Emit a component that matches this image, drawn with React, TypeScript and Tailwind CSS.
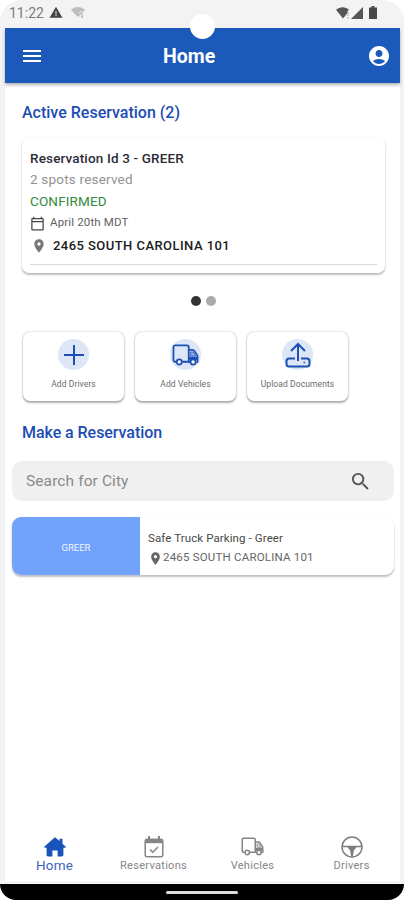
import type { ReactNode } from 'react';
import {
  MdAccountCircle,
  MdLocationOn,
  MdMenu,
  MdOutlineCalendarToday,
  MdSearch,
  MdWarning,
} from 'react-icons/md';

function TruckIcon({ className }: { className: string }) {
  return (
    <svg viewBox="0 0 26 21" className={className} fill="none" stroke="currentColor" strokeWidth="1.7">
      <path d="M4 17H3c-1 0-1.6-.6-1.6-1.6V2.8c0-1 .6-1.6 1.6-1.6h11.5c1 0 1.600.600 1.600 1.600V17H10" />
      <path d="M16 5.500h3.800c.600 0 1 .200 1.400.700l3 4.300c.300.400.400.700.400 1.200V17h-1.200M16 17h1.500" />
      <path d="M18 7.500h2.200l2.600 4H18Z" fill="currentColor" fillOpacity="0.35" strokeWidth="0.8" />
      <path d="M16 12.200h8.600v3H16Z" fill="currentColor" stroke="none" />
      <circle cx="7" cy="17.300" r="2.500" fill="white" />
      <circle cx="20.300" cy="17.300" r="2.500" fill="white" />
    </svg>
  );
}

function UploadIcon() {
  return (
    <svg viewBox="0 0 28 28" className="w-7 h-7" fill="none" stroke="#1d4fb5" strokeWidth="2">
      <path d="M11 17.500H5a2.500 2.500 0 0 0-2.500 2.500v3A2.500 2.500 0 0 0 5 25.500h18a2.500 2.500 0 0 0 2.500-2.500v-3a2.500 2.500 0 0 0-2.500-2.500h-6" />
      <path d="M14 20V3M7 10l7-7 7 7" />
      <path d="M19.500 21.500h1.500" strokeWidth="1.500" />
    </svg>
  );
}

function HomeIcon() {
  return (
    <svg viewBox="0 0 22 20" className="w-[22px] h-5" fill="#1b54b8">
      <path d="M10.300.700a1 1 0 0 1 1.400 0l3.800 3.300V1.800h3v4.900l3 2.700c.600.600.300 1.300-.500 1.300h-1.600v7.100c0 1-.600 1.600-1.500 1.600h-4.300v-6H8.400v6H4.100c-.900 0-1.500-.600-1.500-1.600v-7.100H1c-.800 0-1.100-.700-.500-1.300Z" />
    </svg>
  );
}

function CalendarCheckIcon() {
  return (
    <svg viewBox="0 0 20 22" className="w-5 h-[22px]" fill="none" stroke="#858585" strokeWidth="1.500">
      <rect x="1.200" y="3.300" width="17.600" height="17.400" rx="2" />
      <path d="M1.500 5.300h17" strokeWidth="3.800" />
      <path d="M5 0v4M15 0v4" strokeWidth="2" />
      <path d="m6 13.600 2.800 2.700 5.200-5.300" />
    </svg>
  );
}

function SteeringIcon() {
  return (
    <svg viewBox="0 0 22 22" className="w-[22px] h-[22px]" fill="none" stroke="#7c7c7c" strokeWidth="1.500">
      <circle cx="11" cy="11" r="10" />
      <path d="M1.500 9.700h19v1.600H15.500l-2.700 3.200-.9 6h-1.800l-.9-6-2.700-3.200H1.500Z" fill="#7c7c7c" stroke="none" />
    </svg>
  );
}

function StatusBar() {
  return (
    <div className="relative h-7 flex items-start pt-[5px] pl-[9px] pr-[25px]">
      <span className="text-[14px] leading-4 text-[#7d7d7d]">11:22</span>
      <MdWarning className="w-[14px] h-[15px] ml-[5px] text-[#444]" />
      <svg viewBox="0 0 14 12" className="w-[14px] h-3 ml-[8px] mt-[2px]" fill="#bdbdbd">
        <path d="M0 3C4-1 10-1 14 3l-2 2v6h-2V7l-3 3Z" />
        <path d="M8.200 6.200c.200-2.200 3.800-2 3.800.200 0 1.400-1.800 1.500-1.800 3" fill="none" stroke="#f3f3f3" />
      </svg>
      <div className="flex items-center ml-auto pt-px">
        <svg viewBox="0 0 14 12" className="w-[14px] h-3" fill="#555">
          <path d="M0 2.800C4-.7 9.500-.7 13 2.800l-1.500 1.500V6L7 11.500Z" />
          <path d="M12 5v4M12 10v1.500" stroke="#aaa" />
        </svg>
        <svg viewBox="0 0 12 12" className="w-3 h-3 ml-px" fill="#555">
          <path d="M12 0v12H0Z" />
        </svg>
        <svg viewBox="0 0 8 13" className="w-2 h-[13px] ml-[6px] mr-[2px]" fill="#484848">
          <path d="M2.500 0h3v1.500H8V13H0V1.500h2.500Z" />
        </svg>
      </div>
      {/* camera hole */}
      <div className="absolute left-[190px] top-[14px] w-[25px] h-[25px] rounded-full bg-white z-10" />
    </div>
  );
}

function ActiveReservation() {
  return (
    <section>
      <h2 className="mt-5 ml-[17px] h-5 leading-5 text-[16px] font-medium text-[#1c4cb4]">
        Active Reservation (2)
      </h2>
      <div className="mt-[15px] ml-[17px] mr-[15px] h-[135px] rounded-[7px] pt-[10px] px-2 shadow-[0_2px_2px_rgba(0,0,0,0.25),0_0_2px_rgba(0,0,0,0.08)]">
        <p className="h-[21px] leading-[21px] text-[13.5px] font-medium text-[#2d2d38] tracking-[0.15px]">Reservation Id 3 - GREER</p>
        <p className="h-[21px] leading-[21px] text-[13.5px] text-[#929292] tracking-[0.2px]">2 spots reserved</p>
        <p className="h-[22px] leading-[22px] text-[13.5px] text-[#338b3b] tracking-[0.15px]">CONFIRMED</p>
        <div className="flex items-center h-[22px]">
          <MdOutlineCalendarToday className="w-[15px] h-[15px] text-[#454545]" />
          <span className="ml-[5px] text-[11.5px] text-[#626262] tracking-[0.15px]">April 20th MDT</span>
        </div>
        <div className="flex items-center h-[23px]">
          <MdLocationOn className="w-4 h-4 ml-px text-[#777]" />
          <span className="ml-[6px] text-[13px] font-medium text-[#202020] tracking-[0.45px]">2465 SOUTH CAROLINA 101</span>
        </div>
        <div className="mt-[7px] h-px bg-[#dadada]" />
      </div>
      <div className="mt-[23px] flex justify-center gap-[5px] pl-px">
        <span className="w-[10px] h-[10px] rounded-full bg-[#333]" />
        <span className="w-[10px] h-[10px] rounded-full bg-[#aaa]" />
      </div>
    </section>
  );
}

function ActionCard({ label, children }: { label: string; children: ReactNode }) {
  return (
    <button className="w-[101px] h-[69px] rounded-[7px] bg-white flex flex-col items-center pt-[7px] shadow-[0_2px_2px_rgba(0,0,0,0.28),0_0_2px_rgba(0,0,0,0.3)]">
      <span className="w-[31px] h-[31px] rounded-full bg-[#dce6f6] flex items-center justify-center text-[#1d4fb5]">
        {children}
      </span>
      <span className="mt-[8px] text-[8.5px] leading-3 text-[#6b6b6b] tracking-[0.1px]">{label}</span>
    </button>
  );
}

function ReservationSearch() {
  return (
    <section>
      <h2 className="mt-[22px] ml-[17px] h-5 leading-5 text-[16px] font-medium text-[#1c4cb4] tracking-[-0.05px]">
        Make a Reservation
      </h2>
      <div className="mt-[18px] ml-[7px] mr-[6px] h-10 rounded-[10px] bg-[#f0f0f0] flex items-center justify-between pl-[14px] pr-[22px]">
        <span className="pt-[2px] text-[15.5px] text-[#8a8a8a] tracking-[0.1px]">Search for City</span>
        <MdSearch className="w-[23px] h-[23px] text-[#555]" />
      </div>
      <div className="mt-4 ml-[7px] mr-[6px] h-[58px] flex rounded-[9px] overflow-hidden shadow-[0_2px_2px_rgba(0,0,0,0.24),0_0_2px_rgba(0,0,0,0.06)]">
        <div className="w-[128px] bg-[#72a3fc] flex items-center justify-center pt-[4px] text-[9.5px] text-[#edf3ff]">GREER</div>
        <div className="pl-2 pt-[11px]">
          <p className="h-5 leading-5 text-[11.5px] text-[#484848] tracking-[0.1px]">Safe Truck Parking - Greer</p>
          <div className="flex items-center h-5">
            <MdLocationOn className="w-[15px] h-[15px] text-[#666]" />
            <span className="text-[11.5px] text-[#666] tracking-[0.2px]">2465 SOUTH CAROLINA 101</span>
          </div>
        </div>
      </div>
    </section>
  );
}

const tabs = [
  { label: 'Home', icon: <HomeIcon /> },
  { label: 'Reservations', icon: <CalendarCheckIcon /> },
  { label: 'Vehicles', icon: <TruckIcon className="w-[23px] h-[19px] text-[#858585]" /> },
  { label: 'Drivers', icon: <SteeringIcon /> },
];

export default function App() {
  return (
    <div className="w-[404px] h-[900px] bg-white overflow-hidden font-['Roboto',sans-serif]">
      <div className="h-[884px] bg-[#f3f3f3] rounded-t-[22px] pl-[5px] pr-1 pb-[3px] flex flex-col">
        <div className="-ml-[5px] -mr-1">
          <StatusBar />
        </div>
        <div className="flex-1 bg-white flex flex-col">
          <header className="h-[55px] shrink-0 bg-[#1b5aba] flex items-center pl-[15px] pr-[9px] text-white shadow-[0_2px_3px_rgba(0,0,0,0.3)]">
            <MdMenu className="w-6 h-6" />
            <h1 className="ml-[119px] mr-auto pt-[2px] text-[19.5px] font-bold">Home</h1>
            <MdAccountCircle className="w-6 h-6" />
          </header>

          <main className="flex-1">
            <ActiveReservation />
            <div className="mt-[26px] ml-[18px] flex gap-[11px]">
              <ActionCard label="Add Drivers">
                <svg viewBox="0 0 20 20" className="w-5 h-5" stroke="currentColor" strokeWidth="2">
                  <path d="M10 0v20M0 10h20" />
                </svg>
              </ActionCard>
              <ActionCard label="Add Vehicles">
                <TruckIcon className="w-[27px] h-[22px] shrink-0" />
              </ActionCard>
              <ActionCard label="Upload Documents">
                <UploadIcon />
              </ActionCard>
            </div>
            <ReservationSearch />
          </main>

          <nav className="h-[46px] shrink-0 flex -mr-px">
            {tabs.map((tab, i) => (
              <div key={tab.label} className="flex-1 flex flex-col items-center">
                <span className="h-[23px] flex items-center">{tab.icon}</span>
                <span
                  className={
                    i === 0
                      ? 'text-[13.5px] leading-[14px] text-[#3b64bd] tracking-[0.2px]'
                      : 'text-[11px] leading-4 text-[#868686] tracking-[0.3px]'
                  }
                >
                  {tab.label}
                </span>
              </div>
            ))}
          </nav>
        </div>
      </div>
      <div className="h-4 bg-black rounded-b-[22px] flex justify-center pt-[7px]">
        <span className="w-[72px] h-[3px] bg-[#ddd] rounded-sm" />
      </div>
    </div>
  );
}
